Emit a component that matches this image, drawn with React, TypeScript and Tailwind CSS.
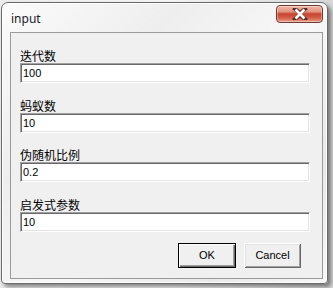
import React from "react";

interface Field {
  label: string;
  value: string;
  gap: string;
}

function CloseButton() {
  return (
    <div className="w-[47px] h-[18px] rounded-[4px] border border-[#6e3b34] bg-[linear-gradient(to_bottom,#f0b8a8_0%,#e29480_35%,#c7432f_50%,#d4604a_75%,#eaa08a_100%)] shadow-[inset_0_0_0_1px_rgba(255,255,255,0.35)] flex items-center justify-center">
      <svg width="16" height="12" viewBox="0 0 16 12">
        <path d="M3 1 L8 5 L13 1 M3 11 L8 7 L13 11" stroke="#5a2a24" strokeWidth="4" fill="none" strokeLinecap="square" />
        <path d="M3.5 1.5 L12.5 10.5 M12.5 1.5 L3.5 10.5" stroke="#ffffff" strokeWidth="2.6" fill="none" />
      </svg>
    </div>
  );
}

function TextBox({ value }: { value: string }) {
  return (
    <div className="h-[20px] w-[290px] bg-white border border-t-[#a0a0a0] border-l-[#a0a0a0] border-b-white border-r-white shadow-[inset_1px_1px_0_#696969,inset_-1px_-1px_0_#e3e3e3] flex items-center pl-[2px] pt-[1px] text-[11px] leading-[13px] text-black font-['Liberation_Sans',Arial,sans-serif]">
      {value}
    </div>
  );
}

function Button({ text, isDefault }: { text: string; isDefault?: boolean }) {
  return (
    <div
      className={
        isDefault
          ? "w-[58px] h-[25px] border border-black bg-[#f0f0f0] shadow-[inset_1px_1px_0_#ffffff,inset_-1px_-1px_0_#696969,inset_-2px_-2px_0_#a0a0a0] flex items-center justify-center text-[11px] text-black font-['Liberation_Sans',Arial,sans-serif]"
          : "w-[57px] h-[25px] bg-[#f0f0f0] shadow-[inset_1px_1px_0_#ffffff,inset_-1px_-1px_0_#696969,inset_2px_2px_0_#e3e3e3,inset_-2px_-2px_0_#a0a0a0] flex items-center justify-center text-[11px] text-black font-['Liberation_Sans',Arial,sans-serif]"
      }
    >
      {text}
    </div>
  );
}

export default function App() {
  const fields: Field[] = [
    { label: "迭代数", value: "100", gap: "mt-[17px]" },
    { label: "蚂蚁数", value: "10", gap: "mt-[17px]" },
    { label: "伪随机比例", value: "0.2", gap: "mt-[16px]" },
    { label: "启发式参数", value: "10", gap: "mt-[17px]" },
  ];

  return (
    <div className="w-[333px] h-[288px] bg-[linear-gradient(to_right,#ececec_0%,#f6f6f6_50%,#d8d8d8_100%)] overflow-hidden pt-[2px] pl-[1px]">
      <div className="w-[327px] h-[282px] rounded-t-[7px] rounded-b-[4px] border border-[#6a6a6a] bg-[linear-gradient(135deg,#fbfbfb_0%,#eeeeee_30%,#f8f8f8_55%,#e9e9e9_80%,#f7f7f7_100%)] shadow-[3px_3px_4px_rgba(0,0,0,0.45),inset_0_0_0_1px_rgba(255,255,255,0.9)] flex flex-col pl-[8px] pr-[4px] pb-[4px]">
        {/* title bar */}
        <div className="h-[29px] flex items-start justify-between">
          <span className="mt-[8px] ml-[1px] text-[12px] leading-[16px] text-[#1a1a2a] font-['Noto_Sans',sans-serif]">input</span>
          <div className="mt-[2px] mr-[0px]">
            <CloseButton />
          </div>
        </div>

        {/* client area */}
        <div className="flex-1 border border-[#9a9a9a] bg-[#f0f0f0] flex flex-col pl-[9px]">
          {fields.map((f, i) => (
            <div key={i} className={f.gap}>
              <div className="text-[12px] leading-[12px] h-[12px] mb-[1px] text-black font-['Noto_Sans_CJK_SC',sans-serif]">{f.label}</div>
              <TextBox value={f.value} />
            </div>
          ))}
          <div className="mt-[11px] flex justify-end gap-[8px] pr-[21px]">
            <Button text="OK" isDefault />
            <Button text="Cancel" />
          </div>
        </div>
      </div>
    </div>
  );
}
